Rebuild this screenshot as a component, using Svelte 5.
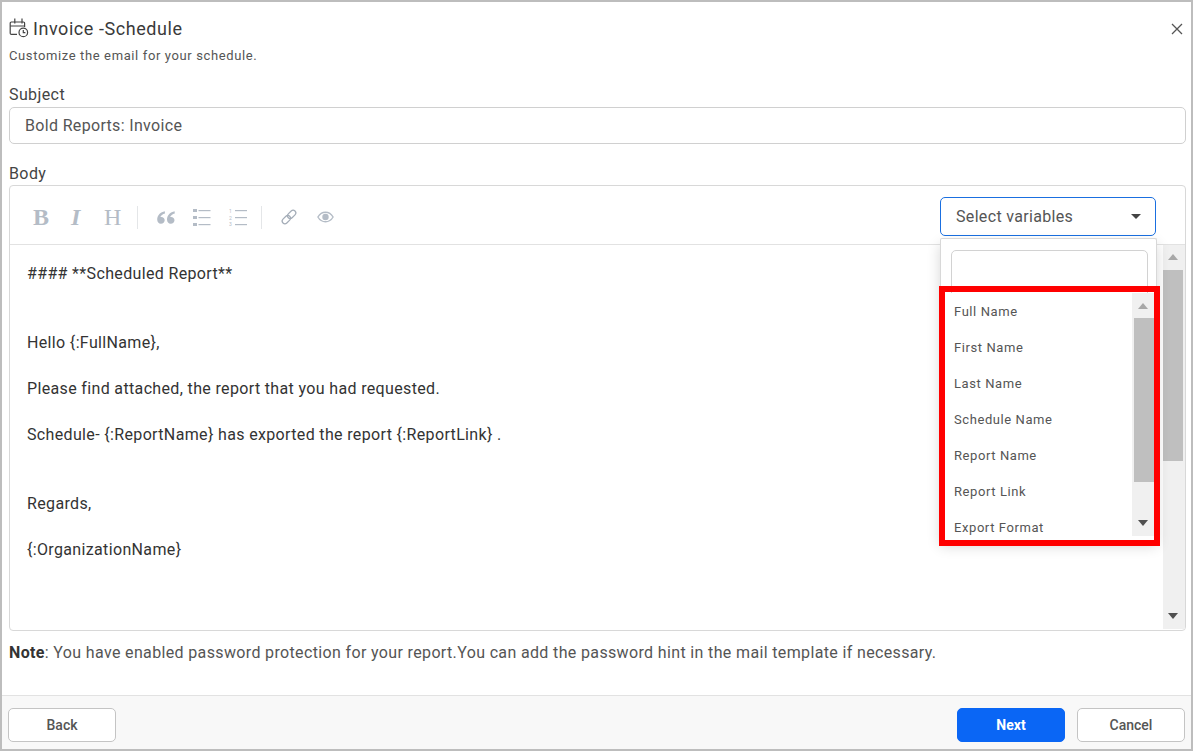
<script lang="ts">
  const lines = [
    '#### **Scheduled Report**',
    '',
    '',
    'Hello {:FullName},',
    '',
    'Please find attached, the report that you had requested.',
    '',
    'Schedule- {:ReportName} has exported the report {:ReportLink} .',
    '',
    '',
    'Regards,',
    '',
    '{:OrganizationName}',
  ];
  const variables = ['Full Name', 'First Name', 'Last Name', 'Schedule Name', 'Report Name', 'Report Link', 'Export Format'];
</script>

<div class="dialog">
  <div class="content">
    <header>
      <h1>
        <svg class="cal" width="20" height="20" viewBox="0 0 20 20" fill="none" stroke="#444" stroke-width="1.2">
          <path d="M8 16.400H2.400a1.200 1.200 0 0 1-1.200-1.200V5.200A1.200 1.200 0 0 1 2.400 4h12a1.200 1.200 0 0 1 1.200 1.200V9" />
          <path d="M1.200 8h14.400M5.800 .5v5M13 .5v5" />
          <circle cx="14.300" cy="14.400" r="4.300" />
          <path d="M14.300 12v2.600h2.100" />
        </svg>
        Invoice -Schedule
      </h1>
      <button class="close" aria-label="Close">
        <svg width="12" height="12" viewBox="0 0 12 12" stroke="#555" stroke-width="1.3"><path d="M1 1l10 10M11 1L1 11" /></svg>
      </button>
    </header>
    <p class="sub">Customize the email for your schedule.</p>

    <div class="label subject-label">Subject</div>
    <div class="input">Bold Reports: Invoice</div>

    <div class="label body-label">Body</div>
    <div class="editor">
      <div class="toolbar">
        <span class="glyph b">B</span>
        <span class="glyph i">I</span>
        <span class="glyph h">H</span>
        <span class="sep"></span>
        <svg class="tool" width="18" height="13" viewBox="0 0 18 13" fill="#b4bcc6">
          <path d="M7.800 .3C3.600 1.300 .2 4 .2 8.600c0 2.700 1.500 4.200 3.700 4.200s3.800-1.600 3.800-3.500-1.500-3.300-3.400-3.300c-.4 0-.7 0-.9.100.4-1.700 2.300-3.100 4.600-3.700zM17.600 .3c-4.200 1-7.600 3.700-7.600 8.300 0 2.700 1.500 4.200 3.700 4.200s3.800-1.600 3.800-3.500-1.500-3.300-3.400-3.300c-.4 0-.7 0-.9.100.4-1.700 2.300-3.100 4.600-3.700z" />
        </svg>
        <svg class="tool ul" width="18" height="17" viewBox="0 0 18 17" fill="#b4bcc6">
          <rect x="0" y="0" width="4" height="3" /><rect x="0" y="7" width="4" height="3" /><rect x="0" y="14" width="4" height="3" />
          <rect x="5.500" y="1" width="12" height="1.200" /><rect x="5.500" y="8" width="12" height="1.200" /><rect x="5.500" y="15" width="12" height="1.200" />
        </svg>
        <svg class="tool ol" width="18" height="17" viewBox="0 0 18 17" fill="#b4bcc6">
          <text x="0" y="4" class="num">1</text><text x="0" y="11" class="num">2</text><text x="0" y="17" class="num">3</text>
          <rect x="6" y="1" width="12" height="1.200" /><rect x="6" y="8" width="12" height="1.200" /><rect x="6" y="15" width="12" height="1.200" />
        </svg>
        <span class="sep second"></span>
        <svg class="tool link" width="18" height="18" viewBox="0 0 18 18" fill="none" stroke="#a3acb7" stroke-width="1.200">
          <g transform="rotate(-45 9 9)">
            <rect x="0.500" y="6.300" width="9.500" height="5.400" rx="2.700" />
            <rect x="8" y="6.300" width="9.500" height="5.400" rx="2.700" />
          </g>
        </svg>
        <svg class="tool eye" width="17" height="12" viewBox="0 0 17 12" fill="none" stroke="#b4bcc6" stroke-width="1.400">
          <path d="M.9 6C2.700 2.900 5.300 1.200 8.500 1.200S14.300 2.900 16.100 6c-1.800 3.100-4.400 4.800-7.600 4.800S2.700 9.100.9 6z" />
          <circle cx="8.500" cy="6" r="2.500" fill="#b4bcc6" />
        </svg>

        <div class="select-wrap">
          <div class="select">
            <span>Select variables</span>
            <span class="caret"></span>
          </div>
          <div class="menu">
            <div class="search"></div>
            <div class="list">
              <ul>
                {#each variables as name}
                  <li>{name}</li>
                {/each}
              </ul>
              <div class="scrollbar">
                <span class="arrow up"></span>
                <span class="thumb"></span>
                <span class="arrow down"></span>
              </div>
            </div>
            <div class="highlight"></div>
          </div>
        </div>
      </div>
      <div class="body">
        <div class="text">
          {#each lines as line}
            <div class="line">{line}</div>
          {/each}
        </div>
        <div class="scrollbar main">
          <span class="arrow up"></span>
          <span class="thumb"></span>
          <span class="arrow down"></span>
        </div>
      </div>
    </div>

    <p class="note"><strong>Note</strong>: You have enabled password protection for your report.You can add the password hint in the mail template if necessary.</p>
  </div>

  <footer>
    <button class="btn">Back</button>
    <span class="spacer"></span>
    <button class="btn primary">Next</button>
    <button class="btn">Cancel</button>
  </footer>
</div>

<style>
  :global(body) {
    margin: 0;
    background: #fff;
  }
  .dialog {
    box-sizing: border-box;
    width: 1193px;
    height: 751px;
    border: 2px solid #bdbdbd;
    display: flex;
    flex-direction: column;
    font-family: Roboto, "Liberation Sans", sans-serif;
    color: #333;
    overflow: hidden;
  }
  .content {
    flex: 1;
    padding: 15px 5px 0 7px;
  }
  header {
    display: flex;
    justify-content: space-between;
    align-items: center;
    height: 24px;
  }
  h1 {
    display: flex;
    align-items: center;
    gap: 4px;
    margin: 0;
    font-size: 18px;
    line-height: 24px;
    font-weight: 400;
    letter-spacing: 0.56px;
    color: #3a3a3a;
  }
  .cal {
    margin-top: -3px;
  }
  .close {
    border: 0;
    padding: 0;
    background: none;
    display: flex;
    margin-right: 3px;
  }
  .sub {
    margin: 6px 0 0;
    font-size: 13px;
    line-height: 18px;
    letter-spacing: 0.62px;
    color: #555;
  }
  .label {
    font-size: 16px;
    line-height: 22px;
    letter-spacing: 0.4px;
    color: #444;
  }
  .subject-label {
    margin-top: 19px;
  }
  .input {
    box-sizing: border-box;
    height: 37px;
    margin-top: 1px;
    padding-left: 15px;
    border: 1px solid #d0d0d0;
    border-radius: 5px;
    font-size: 16px;
    line-height: 35px;
    letter-spacing: 0.33px;
    color: #555;
  }
  .body-label {
    margin-top: 19px;
  }
  .editor {
    box-sizing: border-box;
    height: 446px;
    border: 1px solid #d8d8d8;
    border-radius: 4px;
    display: flex;
    flex-direction: column;
  }
  .toolbar {
    box-sizing: border-box;
    height: 59px;
    flex: none;
    display: flex;
    align-items: center;
    padding: 4px 29px 0 23px;
    border-bottom: 1px solid #e2e2e2;
  }
  .glyph {
    font-family: "Liberation Serif", serif;
    font-size: 24px;
    line-height: 24px;
    color: #b4bcc6;
  }
  .b {
    font-weight: 700;
    width: 37px;
  }
  .i {
    font-style: italic;
    font-weight: 700;
    width: 34px;
    padding-left: 1px;
    box-sizing: border-box;
  }
  .h {
    width: 33px;
  }
  .sep {
    width: 1px;
    height: 23px;
    background: #e4e6e8;
    margin: 0 19px 0 0;
  }
  .sep.second {
    margin: 0 18px 0 14px;
  }
  .tool {
    flex: none;
  }
  .num {
    font-family: Roboto, sans-serif;
    font-size: 5px;
    letter-spacing: 0;
  }
  .ul {
    margin-left: 18px;
  }
  .ol {
    margin-left: 18px;
  }
  .eye {
    margin-left: 19px;
  }
  .select-wrap {
    position: relative;
    margin-left: auto;
    margin-top: 7px;
    align-self: flex-start;
    width: 216px;
  }
  .select {
    box-sizing: border-box;
    height: 39px;
    display: flex;
    justify-content: space-between;
    align-items: center;
    padding: 0 14px 0 15px;
    border: 1px solid #1a6fe0;
    border-radius: 5px;
    font-size: 16px;
    letter-spacing: 0.33px;
    color: #555;
    background: #fff;
  }
  .caret {
    width: 0;
    height: 0;
    border-left: 5px solid transparent;
    border-right: 5px solid transparent;
    border-top: 5px solid #444;
  }
  .menu {
    position: absolute;
    z-index: 2;
    top: 41px;
    left: 0;
    width: 217px;
    box-sizing: border-box;
    height: 302px;
    border: 1px solid #d8d8d8;
    border-bottom: 0;
    border-radius: 2px;
    background: #fff;
    box-shadow: 0 6px 14px rgba(0, 0, 0, 0.16);
    padding: 11px 8px 0 10px;
  }
  .search {
    box-sizing: border-box;
    height: 60px;
    border: 1px solid #d2d2d2;
    border-radius: 5px;
  }
  .list {
    position: absolute;
    left: 4px;
    right: 2px;
    top: 54px;
    height: 247px;
    background: #fff;
    display: flex;
    overflow: hidden;
  }
  ul {
    flex: 1;
    list-style: none;
    margin: 0;
    padding: 1px 0 0 9px;
  }
  li {
    height: 36px;
    line-height: 36px;
    font-size: 13px;
    letter-spacing: 0.58px;
    color: #555;
  }
  .scrollbar {
    box-sizing: border-box;
    width: 22px;
    height: 243px;
    padding: 0 0 0 2px;
    background: #f0f0f0;
    display: flex;
    flex-direction: column;
    position: relative;
    flex: none;
  }
  .thumb {
    display: block;
    height: 164px;
    background: #bfbfbf;
  }
  .arrow {
    display: block;
    width: 0;
    height: 0;
    margin-left: 4px;
    border-left: 5.5px solid transparent;
    border-right: 5.500px solid transparent;
  }
  .arrow.up {
    border-bottom: 6px solid #a8a8a8;
    margin-top: 10px;
    margin-bottom: 9px;
  }
  .arrow.down {
    border-top: 6px solid #505050;
    margin-top: 38px;
  }
  .highlight {
    position: absolute;
    left: -2px;
    top: 47px;
    width: 221px;
    height: 260px;
    box-sizing: border-box;
    border: 6px solid #f00;
    pointer-events: none;
  }
  .body {
    flex: 1;
    display: flex;
    min-height: 0;
  }
  .text {
    flex: 1;
    padding: 17px 0 0 17px;
    font-size: 16px;
    letter-spacing: 0.35px;
    color: #333;
  }
  .line {
    height: 23px;
    line-height: 23px;
  }
  .scrollbar.main {
    height: 384px;
    padding: 0 2px 0 0;
  }
  .main .arrow {
    margin-left: 5px;
  }
  .main .thumb {
    height: 191px;
  }
  .main .arrow.up {
    margin-top: 9px;
    margin-bottom: 10px;
  }
  .main .arrow.down {
    margin-top: 152px;
  }
  .note {
    margin: 11px 0 0;
    font-size: 16px;
    line-height: 22px;
    letter-spacing: 0.355px;
    color: #555;
  }
  .note strong {
    font-weight: 700;
    color: #333;
  }
  footer {
    box-sizing: border-box;
    height: 54px;
    flex: none;
    display: flex;
    align-items: flex-start;
    gap: 12px;
    padding: 12px 6px 0 6px;
    border-top: 1px solid #e2e2e2;
    background: #f8f8f8;
  }
  .spacer {
    flex: 1;
  }
  .btn {
    box-sizing: border-box;
    width: 108px;
    height: 34px;
    border: 1px solid #c4c4c4;
    border-radius: 5px;
    background: #fff;
    font-family: inherit;
    font-size: 14px;
    font-weight: 500;
    color: #555;
    padding: 0;
  }
  .btn.primary {
    background: #0a66f5;
    border-color: #0a66f5;
    color: #fff;
    font-weight: 700;
  }
</style>
